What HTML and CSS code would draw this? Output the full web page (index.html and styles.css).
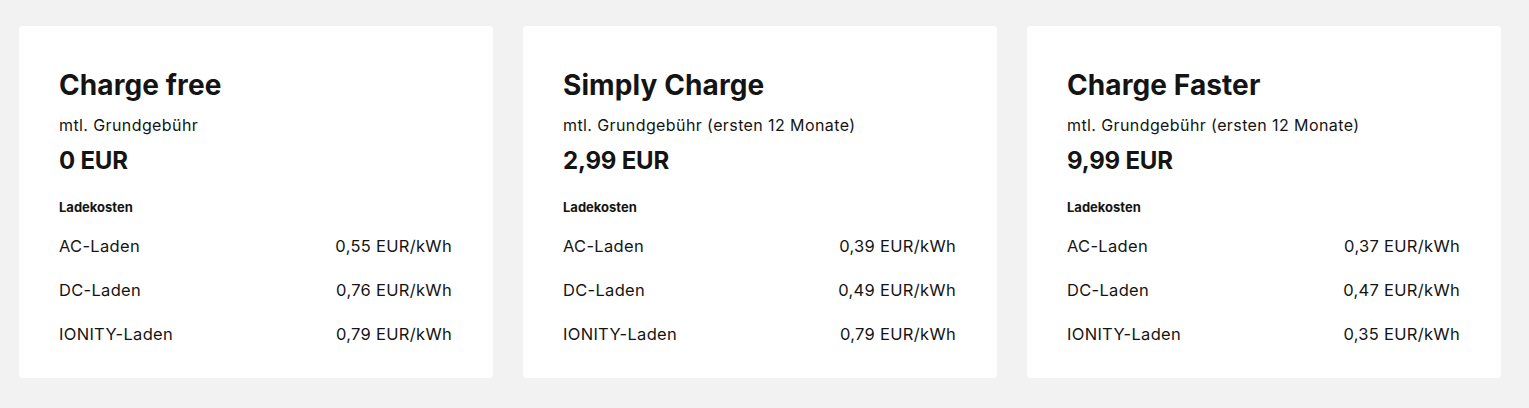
FILE: index.html
```html
<!DOCTYPE html>
<html lang="de">
<head>
<meta charset="utf-8">
<title>Tarife</title>
<link rel="stylesheet" href="styles.css">
</head>
<body>
<main class="plans">
  <section class="card">
    <h2 class="title">Charge free</h2>
    <p class="fee-label">mtl. Grundgebühr</p>
    <p class="fee">0 EUR</p>
    <h3 class="section">Ladekosten</h3>
    <ul class="rates">
      <li class="rate"><span>AC-Laden</span><span>0,55 EUR/kWh</span></li>
      <li class="rate"><span>DC-Laden</span><span>0,76 EUR/kWh</span></li>
      <li class="rate"><span>IONITY-Laden</span><span>0,79 EUR/kWh</span></li>
    </ul>
  </section>
  <section class="card">
    <h2 class="title">Simply Charge</h2>
    <p class="fee-label">mtl. Grundgebühr (ersten 12 Monate)</p>
    <p class="fee">2,99 EUR</p>
    <h3 class="section">Ladekosten</h3>
    <ul class="rates">
      <li class="rate"><span>AC-Laden</span><span>0,39 EUR/kWh</span></li>
      <li class="rate"><span>DC-Laden</span><span>0,49 EUR/kWh</span></li>
      <li class="rate"><span>IONITY-Laden</span><span>0,79 EUR/kWh</span></li>
    </ul>
  </section>
  <section class="card">
    <h2 class="title">Charge Faster</h2>
    <p class="fee-label">mtl. Grundgebühr (ersten 12 Monate)</p>
    <p class="fee">9,99 EUR</p>
    <h3 class="section">Ladekosten</h3>
    <ul class="rates">
      <li class="rate"><span>AC-Laden</span><span>0,37 EUR/kWh</span></li>
      <li class="rate"><span>DC-Laden</span><span>0,47 EUR/kWh</span></li>
      <li class="rate"><span>IONITY-Laden</span><span>0,35 EUR/kWh</span></li>
    </ul>
  </section>
</main>
</body>
</html>
```
FILE: styles.css
```css
* { box-sizing: border-box; }
html, body {
  margin: 0;
  padding: 0;
  background: #f2f2f2;
}
body {
  font-family: Inter, "Noto Sans", sans-serif;
  color: #141414;
}
.plans {
  display: grid;
  grid-template-columns: repeat(3, 474px);
  column-gap: 30px;
  padding: 26px 28px 30px 19px;
}
.card {
  background: #ffffff;
  border-radius: 4px;
  height: 352px;
  padding: 41px 41px 0 40px;
}
.title {
  margin: 0;
  font-size: 28px;
  line-height: 36px;
  font-weight: 700;
  letter-spacing: 0.1px;
}
.fee-label {
  margin: 10px 0 0;
  font-size: 16px;
  line-height: 24px;
  font-weight: 400;
  letter-spacing: 0.4px;
}
.fee {
  margin: 8px 0 0;
  font-size: 24px;
  line-height: 32px;
  font-weight: 700;
  letter-spacing: -0.2px;
}
.section {
  margin: 20px 0 0;
  font-size: 13px;
  line-height: 20px;
  font-weight: 700;
}
.rates {
  list-style: none;
  margin: 17px 0 0;
  padding: 0;
}
.rate {
  display: flex;
  justify-content: space-between;
  font-size: 16.5px;
  line-height: 24px;
  letter-spacing: 0.3px;
  margin-bottom: 20px;
}
```
